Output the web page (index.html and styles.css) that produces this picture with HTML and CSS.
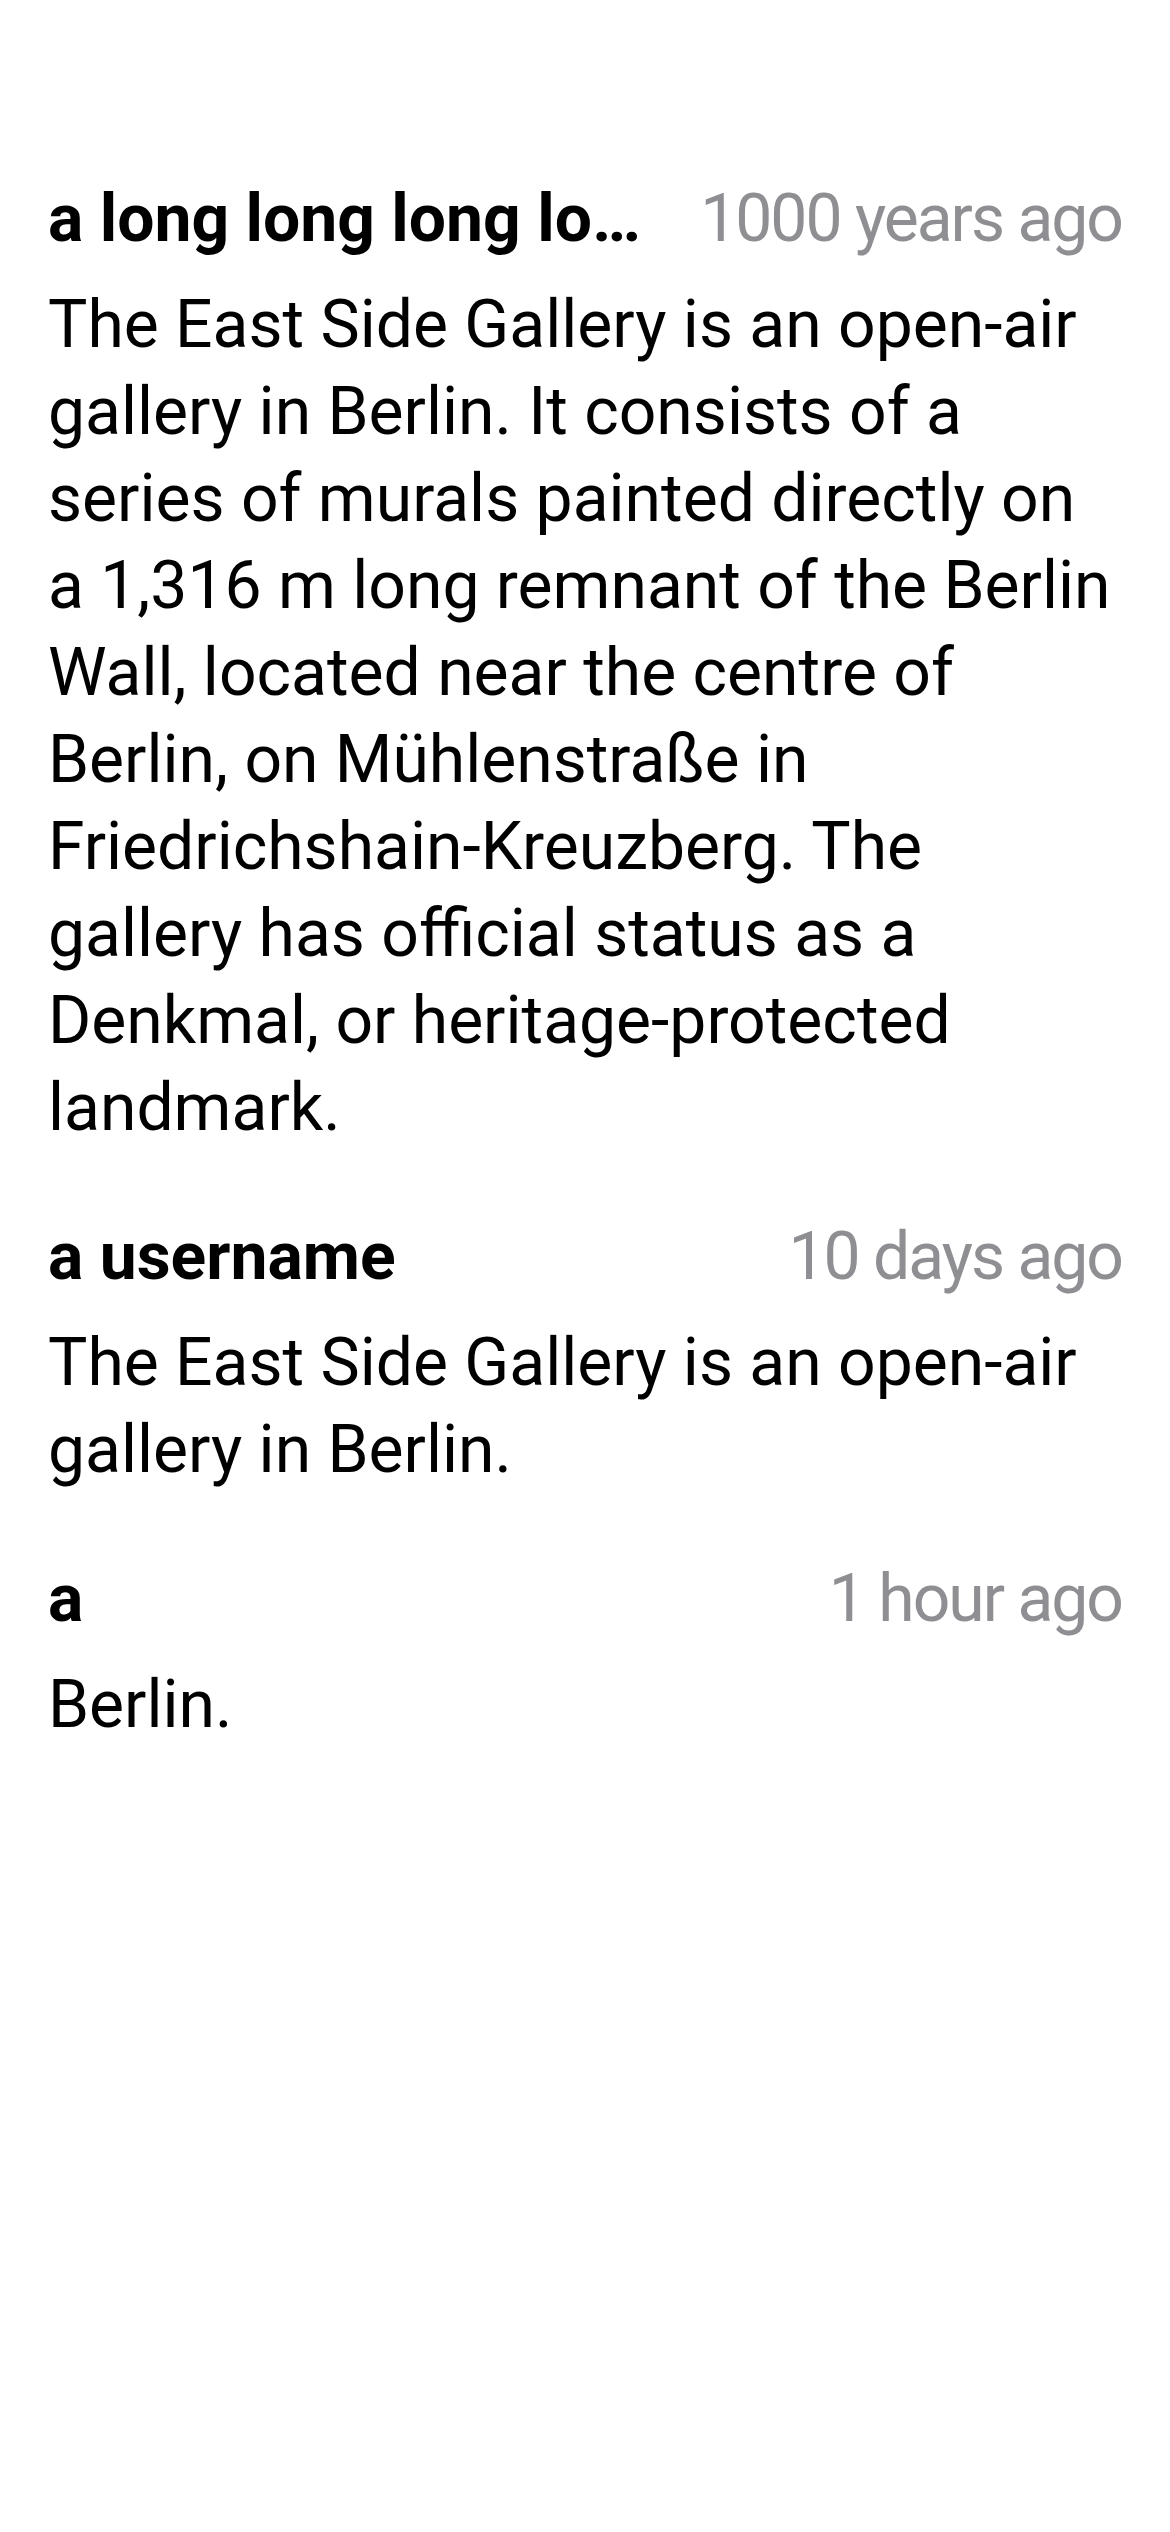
FILE: index.html
```html
<!DOCTYPE html>
<html lang="en">
<head>
<meta charset="utf-8">
<title>Comments</title>
<link rel="stylesheet" href="styles.css">
</head>
<body>
<main class="comments">
  <article class="comment">
    <header class="comment-header">
      <span class="comment-author">a long long long long long long long long username</span>
      <span class="comment-time">1000 years ago</span>
    </header>
    <p class="comment-body">The East Side Gallery is an open&#8209;air gallery in Berlin. It consists of a series of murals painted directly on a 1,316&nbsp;m long remnant of the Berlin Wall, located near the centre of Berlin, on Mühlenstraße in Friedrichshain-Kreuzberg. The gallery has official status as a Denkmal, or heritage-protected landmark.</p>
  </article>
  <article class="comment">
    <header class="comment-header">
      <span class="comment-author">a username</span>
      <span class="comment-time">10 days ago</span>
    </header>
    <p class="comment-body">The East Side Gallery is an open&#8209;air gallery in Berlin.</p>
  </article>
  <article class="comment">
    <header class="comment-header">
      <span class="comment-author">a</span>
      <span class="comment-time">1 hour ago</span>
    </header>
    <p class="comment-body">Berlin.</p>
  </article>
</main>
</body>
</html>
```
FILE: styles.css
```css
html, body {
  margin: 0;
  padding: 0;
  background: #ffffff;
}

body {
  font-family: Roboto, "Liberation Sans", sans-serif;
  color: #000000;
  -webkit-font-smoothing: antialiased;
}

.comments {
  display: flex;
  flex-direction: column;
  gap: 62px;
  padding: 175px 48px 0 48px;
}

.comment {
  display: flex;
  flex-direction: column;
  gap: 19px;
}

.comment-header {
  display: flex;
  align-items: baseline;
  justify-content: space-between;
  gap: 40px;
  font-size: 66px;
  line-height: 87px;
}

.comment-author {
  font-weight: 700;
  min-width: 0;
  overflow: hidden;
  white-space: nowrap;
  text-overflow: ellipsis;
}

.comment-time {
  flex-shrink: 0;
  color: #8e8e93;
  font-weight: 400;
  letter-spacing: -2px;
}

.comment-body {
  margin: 0;
  font-size: 66px;
  line-height: 87px;
  font-weight: 400;
}
```
